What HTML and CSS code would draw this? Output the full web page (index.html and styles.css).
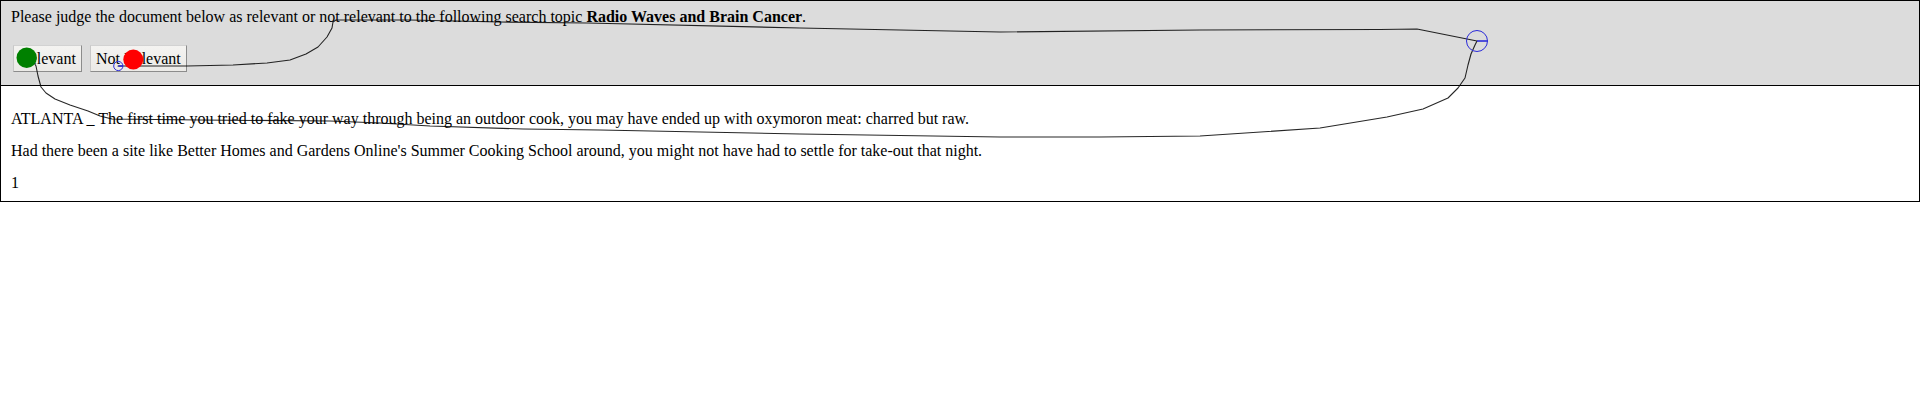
FILE: index.html
```html
<!DOCTYPE html>
<html>
<head>
<meta charset="utf-8">
<title>Relevance judgement</title>
<link rel="stylesheet" href="styles.css">
</head>
<body>
<div class="page">
  <div class="judge">
    <p class="prompt">Please judge the document below as relevant or not relevant to the following search topic <b>Radio Waves and Brain Cancer</b>.</p>
    <div class="actions">
      <button class="btn" type="button">Relevant</button>
      <button class="btn" type="button">Not Relevant</button>
    </div>
  </div>
  <div class="doc">
    <p>ATLANTA _ The first time you tried to fake your way through being an outdoor cook, you may have ended up with oxymoron meat: charred but raw.</p>
    <p>Had there been a site like Better Homes and Gardens Online's Summer Cooking School around, you might not have had to settle for take-out that night.</p>
    <p>1</p>
  </div>
  <svg class="trace" width="1920" height="400" viewBox="0 0 1920 400" xmlns="http://www.w3.org/2000/svg">
    <path class="trail" d="M28,58 L33,61 L36,66 L38,76 L41,87 L46,93 L55,99 L70,105 L88,111 L100,116 L112,119 L200,120 L330,121 L380,123 L430,126 L523,129 L600,130 L800,134 L1000,137 L1100,137 L1200,136 L1320,128 L1387,117 L1423,109 L1448,98 L1458,88 L1465,78 L1468,65 L1471,54 L1475,45 L1477,41 L1417,29 L1380,29.5 L1200,30 L1000,32 L800,28 L587,23 L500,22 L410,20 L336,20 L333,22 L332,28 L327,37 L318,47 L306,54 L290,60 L267,63 L233,65 L187,66 L143,66 L125,66 L118,66"/>
    <circle class="dot-green" cx="26.7" cy="57.8" r="10.2"/>
    <circle class="dot-red" cx="133.3" cy="59.5" r="10"/>
    <circle class="ring" cx="118.3" cy="66" r="4.6"/>
    <line class="tick" x1="118.3" y1="66" x2="122.9" y2="66"/>
    <circle class="ring" cx="1477" cy="41" r="10.5"/>
    <line class="tick" x1="1477" y1="41" x2="1487.5" y2="41"/>
  </svg>
</div>
</body>
</html>
```

FILE: styles.css
```css
html, body {
  margin: 0;
  padding: 0;
  background: #ffffff;
}

body {
  font-family: "Liberation Serif", "Times New Roman", serif;
  font-size: 16px;
  color: #000000;
}

.page {
  position: relative;
  width: 1920px;
}

.judge {
  background: #dcdcdc;
  border: 1px solid #000000;
  padding: 7px 10px 13px;
}

.prompt {
  margin: 0;
  line-height: 18px;
}

.actions {
  display: flex;
  gap: 8px;
  margin-top: 19px;
  padding-left: 2px;
}

.btn {
  font-family: "Liberation Serif", "Times New Roman", serif;
  font-size: 16px;
  color: #000000;
  height: 27px;
  margin: 0;
  padding: 0 5px;
  background: linear-gradient(#f4f3f1, #ebeae7);
  border: 1px solid;
  border-color: #d2d2d2 #8c8c8c #8c8c8c #c8c8c8;
  border-radius: 0;
  line-height: 18px;
}

.doc {
  border: 1px solid #000000;
  border-top: none;
  padding: 24px 10px 9px;
}

.doc p {
  margin: 0 0 14px;
  line-height: 18px;
}

.doc p:last-child {
  margin-bottom: 0;
}

.trace {
  position: absolute;
  top: 0;
  left: 0;
  pointer-events: none;
}

.trail {
  fill: none;
  stroke: #000000;
  stroke-width: 1.1;
  stroke-linejoin: round;
  stroke-linecap: round;
  opacity: 0.85;
}

.dot-green {
  fill: #008000;
}

.dot-red {
  fill: #ff0000;
}

.ring {
  fill: none;
  stroke: #2b2bd9;
  stroke-width: 1;
}

.tick {
  stroke: #2b2bd9;
  stroke-width: 1.6;
}
```
